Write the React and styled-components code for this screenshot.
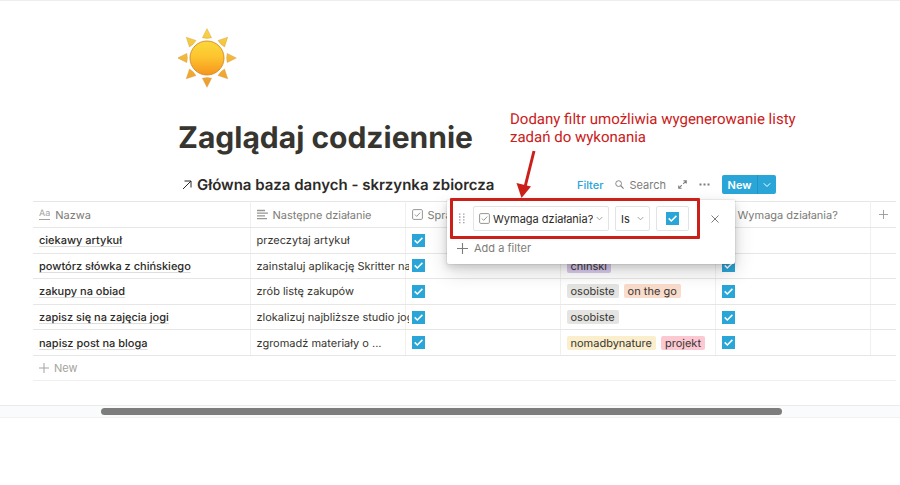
import React from "react";
import styled, { createGlobalStyle } from "styled-components";

const GlobalStyle = createGlobalStyle`
  * { box-sizing: border-box; }
  body {
    margin: 0;
    background: #fff;
    color: #373530;
    font-family: Inter, "Liberation Sans", sans-serif;
    font-size: 11px;
    line-height: 16px;
    text-rendering: geometricPrecision;
  }
  button, input, select { font: inherit; color: inherit; margin: 0; }
`;

const blue = "#2aa5d8";
const red = "#cb2019";
const line = "#e6e6e5";
const muted = "#7d7c78";

const tick =
  "url(\"data:image/svg+xml,%3Csvg xmlns='http://www.w3.org/2000/svg' viewBox='0 0 13 13'%3E%3Cpath d='M2.7 6.4 5.3 9 10.4 3.9' fill='none' stroke='white' stroke-width='1.5'/%3E%3C/svg%3E\")";

const Page = styled.div`
  border-top: 1px solid #eeeeee;
  border-bottom: 1px solid #f0f0f0;
`;

const Header = styled.header`
  padding: 27px 124px 0 178px;
`;

const SunIcon = styled.svg`
  display: block;
  width: 60px;
  height: 60px;
`;

const Title = styled.h1`
  margin: 30px 0 0;
  font-size: 30px;
  line-height: 40px;
  font-weight: 700;
  white-space: nowrap;
`;

const DatabaseBar = styled.div`
  position: relative;
  display: flex;
  align-items: center;
  justify-content: space-between;
  height: 19px;
  margin: 17px 124px 7px 182px;
`;

const DatabaseTitle = styled.h2`
  display: flex;
  align-items: center;
  gap: 5px;
  margin: 0;
  font-size: 15px;
  line-height: 18px;
  font-weight: 600;
  white-space: nowrap;
  color: #2b2a27;
`;

const Toolbar = styled.div`
  display: flex;
  align-items: center;
  gap: 12px;
`;

const ToolButton = styled.button`
  display: inline-flex;
  align-items: center;
  gap: 5px;
  padding: 0;
  border: 0;
  background: none;
  font-size: 11px;
  font-weight: ${(p) => (p.$active ? 500 : 400)};
  color: ${(p) => (p.$active ? blue : muted)};
  cursor: pointer;
`;

const SplitButton = styled.div`
  display: flex;
  height: 19px;
  border-radius: 2px;
  overflow: hidden;
  background: ${blue};
`;

const SplitPart = styled.button`
  display: flex;
  align-items: center;
  justify-content: center;
  width: ${(p) => (p.$narrow ? "19px" : "35px")};
  padding: 0;
  border: 0;
  border-left: ${(p) => (p.$narrow ? "1px solid #1f93c4" : "0")};
  background: none;
  color: #fff;
  font-size: 11px;
  font-weight: 600;
  cursor: pointer;
`;

const Icon = styled.svg`
  display: block;
  flex: none;
  width: ${(p) => p.$w}px;
  height: ${(p) => p.$h || p.$w}px;
  fill: none;
  stroke: currentColor;
`;

const TableArea = styled.main`
  margin: 0 4px 0 33px;
`;

const Table = styled.table`
  width: 100%;
  height: 155px;
  table-layout: fixed;
  border-collapse: collapse;
  border-top: 1px solid ${line};
`;

const Column = styled.col`
  width: ${(p) => (p.$width ? p.$width + "px" : "auto")};
`;

const HeadRow = styled.tr`
  height: 26px;
`;

const HeadCell = styled.th`
  padding: 0 6px;
  overflow: hidden;
  border-bottom: 1px solid ${line};
  border-right: 1px solid #f0f0ef;
  text-align: left;
  font-weight: 400;
  white-space: nowrap;
  color: ${muted};
  &:last-child { border-right: 0; padding-left: 8px; }
`;

const HeadLabel = styled.span`
  display: flex;
  align-items: center;
  gap: 5px;
  & > svg { color: #989793; }
`;

const TextMark = styled.span`
  font-size: 9px;
  line-height: 10px;
  border-bottom: 1px solid #a3a29f;
  color: #a3a29f;
`;

const Row = styled.tr`
  height: 25px;
`;

const Cell = styled.td`
  padding: 0 0 0 6px;
  border-bottom: 1px solid ${line};
  border-right: 1px solid #f0f0ef;
  white-space: nowrap;
  &:last-child { border-right: 0; }
`;

const CellText = styled.div`
  overflow: clip;
  overflow-clip-margin: 4px;
`;

const NameLink = styled.a`
  color: #2b2a27;
  font-weight: 500;
  text-decoration: underline;
  text-decoration-color: #dddddb;
  text-underline-offset: 2px;
`;

const CheckBox = styled.input`
  appearance: none;
  display: block;
  width: 13px;
  height: 13px;
  background: #fff;
  border: 1px solid #8a8986;
  &:checked {
    border: 0;
    background: ${blue} ${tick} center / 13px 13px no-repeat;
  }
`;

const TagList = styled.div`
  display: flex;
  gap: 5px;
`;

const tones = {
  purple: "#d8c9ec",
  gray: "#e4e4e3",
  orange: "#fadccd",
  yellow: "#faeecd",
  pink: "#fcc9d3",
};

const Tag = styled.span`
  padding: 0 4px;
  border-radius: 2px;
  line-height: 14px;
  background: ${(p) => tones[p.$tone]};
`;

const NewRow = styled.button`
  display: flex;
  align-items: center;
  gap: 5px;
  width: 100%;
  height: 25px;
  padding: 0 6px;
  border: 0;
  border-bottom: 1px solid #efefee;
  background: none;
  color: #a4a3a0;
  cursor: pointer;
`;

const Popover = styled.section`
  position: absolute;
  z-index: 1;
  top: 25px;
  right: 41px;
  width: 288px;
  padding: 6px 8px 6px 10px;
  border-radius: 2px;
  background: #fff;
  box-shadow: 0 0 0 1px rgba(15, 15, 15, 0.05), 0 3px 7px rgba(15, 15, 15, 0.14),
    0 8px 20px rgba(15, 15, 15, 0.16);
`;

const FilterRow = styled.div`
  display: flex;
  align-items: center;
  gap: 6px;
`;

const Field = styled.label`
  display: flex;
  align-items: center;
  justify-content: center;
  gap: 3px;
  height: 25px;
  padding: 0 5px;
  width: ${(p) => p.$width}px;
  border: 1px solid #e3e3e6;
  border-radius: 2px;
  color: #97968f;
`;

const Select = styled.select`
  appearance: none;
  flex: 1;
  min-width: 0;
  padding: 0;
  border: 0;
  background: none;
  font-size: 11px;
  font-weight: 400;
  color: #2b2a27;
`;

const RemoveButton = styled(ToolButton)`
  margin-left: 16px;
`;

const AddFilter = styled(ToolButton)`
  gap: 6px;
  margin-top: 9px;
`;

const Note = styled.p`
  position: absolute;
  right: -30px;
  bottom: 48px;
  width: 296px;
  margin: 0;
  font-family: Roboto, sans-serif;
  font-size: 15px;
  line-height: 18px;
  color: ${red};
`;

const Highlight = styled.div`
  position: absolute;
  z-index: 2;
  top: 23px;
  right: 76px;
  width: 250px;
  height: 41px;
  border: 3px solid ${red};
  border-radius: 1px;
  pointer-events: none;
`;

const Arrow = styled.svg`
  position: absolute;
  z-index: 2;
  top: -25px;
  right: 236px;
  width: 26px;
  height: 50px;
  pointer-events: none;
`;

const ScrollTrack = styled.div`
  margin-top: 24px;
  padding: 2px 118px 2px 101px;
  border-top: 1px solid #ebebeb;
  border-bottom: 1px solid #f2f2f2;
  background: #fafbfd;
`;

const ScrollThumb = styled.div`
  height: 7px;
  border-radius: 4px;
  background: #7c7d7c;
`;

const Footer = styled.footer`
  height: 67px;
`;

const Plus = ({ size }) => (
  <Icon $w={size} viewBox="0 0 10 10">
    <path d="M5 0v10M0 5h10" />
  </Icon>
);

const Chevron = ({ size = 7 }) => (
  <Icon $w={size} viewBox="0 0 8 8">
    <path d="M.8 2.3 4 5.5l3.2-3.2" />
  </Icon>
);

const CheckMark = () => (
  <Icon $w={11} viewBox="0 0 11 11">
    <rect x=".6" y=".6" width="9.8" height="9.8" rx="1.2" />
    <path d="M2.9 5.5 4.7 7.4 8.2 3.6" />
  </Icon>
);

const Lines = () => (
  <Icon $w={11} viewBox="0 0 11 11">
    <path d="M0 1.5h8M0 4.2h11M0 6.9h8M0 9.6h10" strokeWidth="1.3" />
  </Icon>
);

function Sun() {
  const rays = [0, 45, 90, 135, 180, 225, 270, 315];
  return (
    <SunIcon viewBox="0 0 60 60" role="img" aria-label="Słońce">
      <defs>
        <linearGradient id="disc" x1="0" y1="0" x2="0" y2="1">
          <stop offset="0" stopColor="#fbd83b" />
          <stop offset=".45" stopColor="#fdc52f" />
          <stop offset="1" stopColor="#f6951d" />
        </linearGradient>
        <linearGradient id="ray" gradientUnits="userSpaceOnUse" x1="0" y1="0" x2="0" y2="60">
          <stop offset="0" stopColor="#f6d746" />
          <stop offset="1" stopColor="#ed9a2c" />
        </linearGradient>
      </defs>
      {rays.map((angle) => {
        const a = (angle * Math.PI) / 180;
        const point = (r, t) => {
          const x = 29 + r * Math.sin(a) + t * Math.cos(a);
          const y = 30 - r * Math.cos(a) + t * Math.sin(a);
          return `${x.toFixed(2)},${y.toFixed(2)}`;
        };
        return (
          <polygon
            key={angle}
            points={`${point(29.3, 0)} ${point(20.2, 4.6)} ${point(19.6, 0)} ${point(20.2, -4.6)}`}
            fill="url(#ray)"
            stroke="#d9953a"
            strokeWidth=".4"
          />
        );
      })}
      <circle cx="29" cy="30" r="17" fill="url(#disc)" stroke="#cf8a2c" strokeWidth=".9" />
    </SunIcon>
  );
}

const rows = [
  { name: "ciekawy artykuł", next: "przeczytaj artykuł", tags: [] },
  {
    name: "powtórz słówka z chińskiego",
    next: "zainstaluj aplikację Skritter na",
    tags: [["chiński", "purple"]],
  },
  {
    name: "zakupy na obiad",
    next: "zrób listę zakupów",
    tags: [["osobiste", "gray"], ["on the go", "orange"]],
  },
  {
    name: "zapisz się na zajęcia jogi",
    next: "zlokalizuj najbliższe studio jogi",
    tags: [["osobiste", "gray"]],
  },
  {
    name: "napisz post na bloga",
    next: "zgromadź materiały o ...",
    tags: [["nomadbynature", "yellow"], ["projekt", "pink"]],
  },
];

function FilterPopover() {
  return (
    <Popover aria-label="Filter">
      <FilterRow>
        <Icon $w={10} $h={11} viewBox="0 0 10 11">
          <path
            d="M2 1.2h1.5M6 1.2h1.5M2 4h1.5M6 4h1.5M2 6.8h1.5M6 6.8h1.5M2 9.6h1.5M6 9.6h1.5"
            stroke="#a5a4a1"
            strokeWidth="1.3"
          />
        </Icon>
        <Field $width={136}>
          <CheckMark />
          <Select aria-label="Property">
            <option>Wymaga działania?</option>
          </Select>
          <Chevron />
        </Field>
        <Field $width={35}>
          <Select aria-label="Condition">
            <option>Is</option>
          </Select>
          <Chevron />
        </Field>
        <Field $width={33}>
          <CheckBox type="checkbox" defaultChecked aria-label="Value" />
        </Field>
        <RemoveButton aria-label="Remove filter">
          <Icon $w={8} viewBox="0 0 8 8">
            <path d="m.5.5 7 7M7.5.5l-7 7" />
          </Icon>
        </RemoveButton>
      </FilterRow>
      <AddFilter>
        <Plus size={11} />
        Add a filter
      </AddFilter>
    </Popover>
  );
}

export default function App() {
  return (
    <>
      <GlobalStyle />
      <Page>
        <Header>
          <Sun />
          <Title>Zaglądaj codziennie</Title>
        </Header>

        <DatabaseBar>
          <DatabaseTitle>
            <Icon $w={10} viewBox="0 0 10 10">
              <path d="M1 9 9 1M2.5 1H9v6.5" />
            </Icon>
            Główna baza danych - skrzynka zbiorcza
          </DatabaseTitle>
          <Toolbar>
            <ToolButton $active>Filter</ToolButton>
            <ToolButton>
              <Icon $w={9} viewBox="0 0 10 10">
                <circle cx="4" cy="4" r="3.2" />
                <path d="m6.3 6.3 3.2 3.2" strokeWidth="1.3" />
              </Icon>
              Search
            </ToolButton>
            <ToolButton aria-label="Open as page">
              <Icon $w={9} viewBox="0 0 10 10">
                <path
                  d="M5.8 4.2 9 1M6 .8h3.2V4M4.2 5.8 1 9M.8 6v3.2H4"
                  strokeWidth="1.2"
                />
              </Icon>
            </ToolButton>
            <ToolButton aria-label="More options">
              <Icon $w={11} $h={3} viewBox="0 0 11 3">
                <path d="M.5 1.5h2M4.5 1.5h2M8.5 1.5h2" strokeWidth="2" />
              </Icon>
            </ToolButton>
            <SplitButton>
              <SplitPart>New</SplitPart>
              <SplitPart $narrow aria-label="New from template">
                <Chevron size={8} />
              </SplitPart>
            </SplitButton>
          </Toolbar>
          <FilterPopover />
          <Note>Dodany filtr umożliwia wygenerowanie listy zadań do wykonania</Note>
          <Highlight />
          <Arrow viewBox="0 0 26 50" aria-hidden="true">
            <path d="M20 1 11 37" stroke={red} strokeWidth="3" />
            <path d="M2.5 33 17 36.5 7.5 48Z" fill={red} />
          </Arrow>
        </DatabaseBar>

        <TableArea>
          <Table>
            <colgroup>
              <Column $width={217} />
              <Column $width={155} />
              <Column $width={155} />
              <Column $width={155} />
              <Column $width={155} />
              <Column />
            </colgroup>
            <thead>
              <HeadRow>
                <HeadCell><HeadLabel><TextMark>Aa</TextMark>Nazwa</HeadLabel></HeadCell>
                <HeadCell><HeadLabel><Lines />Następne działanie</HeadLabel></HeadCell>
                <HeadCell><HeadLabel><CheckMark />Sprawdzone</HeadLabel></HeadCell>
                <HeadCell><HeadLabel><Lines />Tagi</HeadLabel></HeadCell>
                <HeadCell><HeadLabel><CheckMark />Wymaga działania?</HeadLabel></HeadCell>
                <HeadCell aria-label="Add column"><HeadLabel><Plus size={9} /></HeadLabel></HeadCell>
              </HeadRow>
            </thead>
            <tbody>
              {rows.map((row) => (
                <Row key={row.name}>
                  <Cell><NameLink href="#">{row.name}</NameLink></Cell>
                  <Cell><CellText>{row.next}</CellText></Cell>
                  <Cell>
                    <CheckBox type="checkbox" defaultChecked aria-label={`Sprawdzone: ${row.name}`} />
                  </Cell>
                  <Cell>
                    <TagList>
                      {row.tags.map(([label, tone]) => (
                        <Tag key={label} $tone={tone}>{label}</Tag>
                      ))}
                    </TagList>
                  </Cell>
                  <Cell>
                    <CheckBox type="checkbox" defaultChecked aria-label={`Wymaga działania: ${row.name}`} />
                  </Cell>
                  <Cell />
                </Row>
              ))}
            </tbody>
          </Table>
          <NewRow>
            <Plus size={10} />
            New
          </NewRow>
        </TableArea>

        <ScrollTrack>
          <ScrollThumb />
        </ScrollTrack>
        <Footer />
      </Page>
    </>
  );
}
